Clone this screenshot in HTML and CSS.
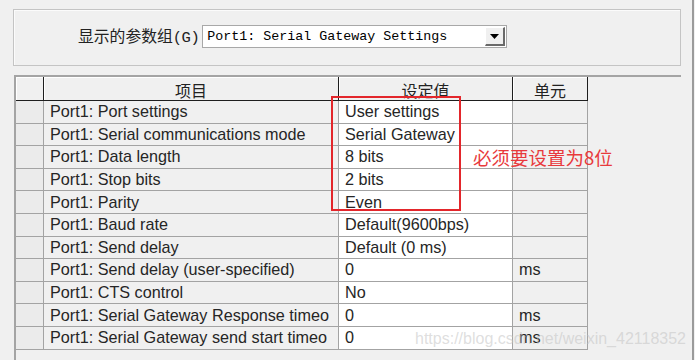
FILE: index.html
```html
<!DOCTYPE html>
<html lang="zh-CN">
<head>
<meta charset="utf-8">
<title>参数设置</title>
<link rel="stylesheet" href="styles.css">
</head>
<body>
<div class="window">
  <div class="groupbox">
    <span class="label">显示的参数组<span class="accel">(G)</span></span>
    <div class="select">
      <span class="select-text">Port1: Serial Gateway Settings</span>
      <span class="select-btn"><svg width="9" height="5" viewBox="0 0 9 5"><path d="M0 0H9L4.5 5Z" fill="#000"/></svg></span>
    </div>
  </div>

  <div class="grid-frame">
    <div class="grid head">
      <div class="hc"></div>
      <div class="hc">项目</div>
      <div class="hc">设定值</div>
      <div class="hc">单元</div>
    </div>
    <div class="grid body">
      <div class="rh"></div><div class="c item">Port1: Port settings</div><div class="c val">User settings</div><div class="c unit"></div>
      <div class="rh"></div><div class="c item">Port1: Serial communications mode</div><div class="c val">Serial Gateway</div><div class="c unit"></div>
      <div class="rh"></div><div class="c item">Port1: Data length</div><div class="c val">8 bits</div><div class="c unit"></div>
      <div class="rh"></div><div class="c item">Port1: Stop bits</div><div class="c val">2 bits</div><div class="c unit"></div>
      <div class="rh"></div><div class="c item">Port1: Parity</div><div class="c val">Even</div><div class="c unit"></div>
      <div class="rh"></div><div class="c item">Port1: Baud rate</div><div class="c val">Default(9600bps)</div><div class="c unit"></div>
      <div class="rh"></div><div class="c item">Port1: Send delay</div><div class="c val">Default (0 ms)</div><div class="c unit"></div>
      <div class="rh"></div><div class="c item">Port1: Send delay (user-specified)</div><div class="c val">0</div><div class="c unit">ms</div>
      <div class="rh"></div><div class="c item">Port1: CTS control</div><div class="c val">No</div><div class="c unit"></div>
      <div class="rh"></div><div class="c item">Port1: Serial Gateway Response timeo</div><div class="c val">0</div><div class="c unit">ms</div>
      <div class="rh"></div><div class="c item">Port1: Serial Gateway send start timeo</div><div class="c val">0</div><div class="c unit">ms</div>
    </div>
  </div>

  <div class="highlight"></div>
  <div class="note">必须要设置为8位</div>
  <div class="watermark">https://blog.csdn.net/weixin_42118352</div>
</div>
</body>
</html>
```
FILE: styles.css
```css
html, body {
  margin: 0;
  padding: 0;
}
body {
  background: #f0f0f0;
  font-family: "Liberation Sans", Arial, sans-serif;
  color: #2a2a2a;
  width: 695px;
  height: 360px;
  overflow: hidden;
}
.window {
  position: relative;
  width: 694px;
  height: 360px;
  box-sizing: border-box;
  border-right: 2px solid #9a9a9a;
  padding-top: 9px;
}
.groupbox {
  margin-left: 13px;
  width: 668px;
  height: 57px;
  box-sizing: border-box;
  border: 1px solid #c4c4c4;
  box-shadow: inset 1px 1px 0 #fbfbfb;
  display: flex;
  align-items: center;
  padding-left: 64px;
  padding-bottom: 2px;
}
.label {
  font-family: "Noto Sans CJK SC", sans-serif;
  font-size: 15.8px;
  line-height: 22px;
  color: #222;
  margin-right: 3px;
}
.accel {
  font-family: "Liberation Mono", monospace;
  font-size: 15.5px;
  letter-spacing: -0.5px;
}
.select {
  width: 305px;
  height: 23px;
  box-sizing: border-box;
  border: 1px solid #a8a8a8;
  background: #fff;
  display: flex;
  align-items: center;
  justify-content: space-between;
  padding: 0 1px 0 4px;
}
.select-text {
  font-family: "Liberation Mono", monospace;
  font-size: 13.33px;
  color: #000;
  white-space: pre;
}
.select-btn {
  width: 20px;
  height: 19px;
  box-sizing: border-box;
  background: #f0f0f0;
  border-top: 1px solid #fff;
  border-left: 1px solid #fff;
  border-right: 2px solid #6a6a6a;
  border-bottom: 2px solid #6a6a6a;
  display: flex;
  align-items: center;
  justify-content: center;
}
.grid-frame {
  margin-top: 9px;
  margin-left: 14px;
  width: 667px;
  height: 285px;
  box-sizing: border-box;
  border-top: 2px solid #a4a4a4;
  border-left: 2px solid #a4a4a4;
}
.grid {
  display: grid;
  grid-template-columns: 28px 295px 174px 75px;
}
.head {
  grid-auto-rows: 24px;
}
.hc {
  box-sizing: border-box;
  background: #f0f0f0;
  border-right: 1px solid #1e1e1e;
  border-bottom: 1px solid #1e1e1e;
  box-shadow: inset 1px 1px 0 #fff;
  display: flex;
  align-items: center;
  justify-content: center;
  font-family: "Noto Sans CJK SC", sans-serif;
  font-size: 16px;
  color: #222;
  line-height: 1;
  padding-top: 2px;
}
.body {
  grid-auto-rows: 22.6px;
}
.rh, .c {
  box-sizing: border-box;
  border-right: 1px solid #a3a3a3;
  border-bottom: 1px solid #a3a3a3;
}
.rh {
  background: #ebebeb;
}
.c {
  display: flex;
  align-items: center;
  padding-left: 6px;
  font-size: 16.2px;
  white-space: nowrap;
  overflow: hidden;
  color: #262626;
}
.item {
  background: #f0f0f0;
}
.val {
  background: #fff;
}
.unit {
  background: #f0f0f0;
}
.highlight {
  position: absolute;
  left: 331px;
  top: 96px;
  width: 130px;
  height: 115px;
  box-sizing: border-box;
  border: 2px solid #e3262b;
}
.note {
  position: absolute;
  left: 473px;
  top: 146px;
  font-family: "Noto Sans CJK SC", sans-serif;
  font-size: 18.5px;
  line-height: 22px;
  color: #e8393c;
}
.watermark {
  position: absolute;
  left: 415px;
  top: 329px;
  font-family: "Liberation Sans", Arial, sans-serif;
  font-size: 16px;
  line-height: 20px;
  color: rgba(195, 195, 195, 0.55);
  white-space: nowrap;
}
```
